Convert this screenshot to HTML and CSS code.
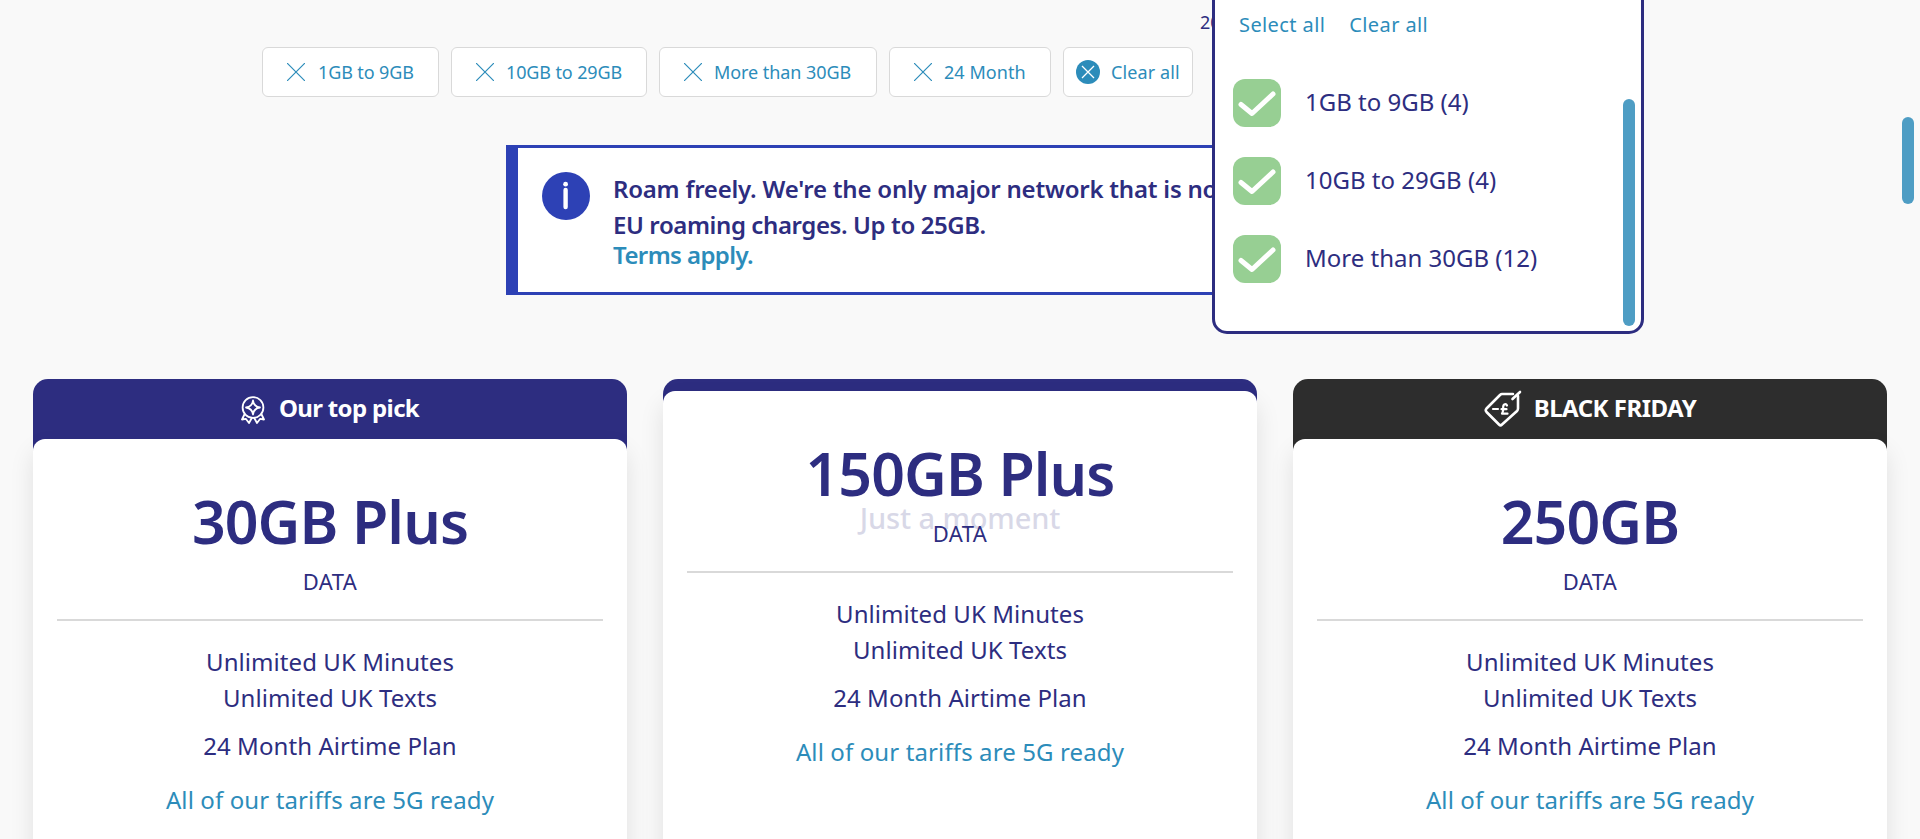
FILE: index.html
```html
<!DOCTYPE html>
<html lang="en">
<head>
<meta charset="utf-8">
<title>SIM only deals</title>
<link rel="stylesheet" href="styles.css">
</head>
<body>
<svg class="defs" width="0" height="0">
  <symbol id="cross" viewBox="0 0 18 18"><path d="M0 0L18 18M18 0L0 18" fill="none" stroke="currentColor" stroke-width="1.2"/></symbol>
  <symbol id="tick" viewBox="0 0 48 48"><path d="M8 25.5L19 34.5L40 15" fill="none" stroke="#fff" stroke-width="5" stroke-linecap="round" stroke-linejoin="round"/></symbol>
</svg>
<main class="page">
  <p class="count">20</p>
  <div class="chips">
    <button class="chip chip-a"><svg class="x"><use href="#cross"/></svg><span>1GB to 9GB</span></button>
    <button class="chip chip-b"><svg class="x"><use href="#cross"/></svg><span>10GB to 29GB</span></button>
    <button class="chip chip-c"><svg class="x"><use href="#cross"/></svg><span>More than 30GB</span></button>
    <button class="chip chip-d"><svg class="x"><use href="#cross"/></svg><span>24 Month</span></button>
    <button class="chip chip-clear"><svg class="clear" viewBox="0 0 24 24"><circle cx="12" cy="12" r="12" fill="currentColor"/><path d="M6 6L18 18M18 6L6 18" stroke="#fff" stroke-width="1.3"/></svg><span>Clear all</span></button>
  </div>
  <section class="notice">
    <svg class="info" viewBox="0 0 48 48"><circle cx="24" cy="24" r="24" fill="#2d41b5"/><circle cx="23.6" cy="12.2" r="2.4" fill="#fff"/><path d="M23.6 18V35" stroke="#fff" stroke-width="4.4" stroke-linecap="round"/></svg>
    <div class="notice-text">
      <p class="lead">Roam freely. We're the only major network that is not</p>
      <p>EU roaming charges. Up to 25GB.</p>
      <a class="terms">Terms apply.</a>
    </div>
  </section>
  <div class="cards">
    <article class="card">
      <header class="ribbon">
        <svg class="rosette" viewBox="0 0 24 28" fill="none" stroke="#fff" stroke-width="1.8" stroke-linejoin="round" stroke-linecap="round"><circle cx="12" cy="11.5" r="10.4"/><path d="M12 4.5Q12.8 10.7 19 11.5Q12.8 12.3 12 18.5Q11.2 12.3 5 11.5Q11.2 10.7 12 4.5Z"/><path d="M3.4 18.5L1 23.5L4.8 22.8L8 27L10.8 22M20.6 18.5L23 23.5L19.2 22.8L16 27L13.2 22"/></svg>
        <span>Our top pick</span>
      </header>
      <div class="body">
        <h2>30GB Plus</h2><p class="unit">DATA</p><hr>
        <p class="row">Unlimited UK Minutes<br>Unlimited UK Texts</p>
        <p class="row term">24 Month Airtime Plan</p>
        <p class="row ready">All of our tariffs are 5G ready</p>
      </div>
    </article>
    <article class="card">
      <header class="ribbon slim"></header>
      <div class="body">
        <h2>150GB Plus</h2><p class="unit">DATA</p><hr>
        <p class="row">Unlimited UK Minutes<br>Unlimited UK Texts</p>
        <p class="row term">24 Month Airtime Plan</p>
        <p class="row ready">All of our tariffs are 5G ready</p>
      </div>
    </article>
    <article class="card">
      <header class="ribbon dark">
        <svg class="tag" viewBox="0 0 38 38" fill="none" stroke="#fff" stroke-width="2.6" stroke-linejoin="round" stroke-linecap="round"><path d="M29 4H18Q17 4 16 5L2.5 18.5Q1 20.3 2.5 22L15 34.5Q16.5 36 18 34.5L33 21Q34 20 34 18.500V6"/><path d="M36 2L28.500 9"/><path d="M9 19H14" stroke-width="2.2"/><path d="M23 15.500Q22.300 13.800 20.800 14.200Q19 14.700 19.200 17.500Q19.500 21.500 18 23.700H23.500M17.500 19.200H22.500" stroke-width="2.2"/></svg>
        <span>BLACK FRIDAY</span>
      </header>
      <div class="body">
        <h2>250GB</h2><p class="unit">DATA</p><hr>
        <p class="row">Unlimited UK Minutes<br>Unlimited UK Texts</p>
        <p class="row term">24 Month Airtime Plan</p>
        <p class="row ready">All of our tariffs are 5G ready</p>
      </div>
    </article>
  </div>
</main>
<div class="loading">Just a moment</div>
<aside class="dropdown">
  <div class="actions"><a>Select all</a><a>Clear all</a></div>
  <ul class="options">
    <li><span class="check"><svg><use href="#tick"/></svg></span><span class="label">1GB to 9GB (4)</span></li>
    <li><span class="check"><svg><use href="#tick"/></svg></span><span class="label">10GB to 29GB (4)</span></li>
    <li><span class="check"><svg><use href="#tick"/></svg></span><span class="label">More than 30GB (12)</span></li>
  </ul>
  <div class="thumb"></div>
</aside>
<div class="page-thumb"></div>
</body>
</html>
```
FILE: styles.css
```css
* { box-sizing: border-box; }
body {
  margin: 0;
  height: 839px;
  overflow: hidden;
  position: relative;
  background: #f9f9f9;
  color: #2d2d80;
  font-family: "Noto Sans", "Open Sans", sans-serif;
  font-size: 24px;
}
p, h2, ul { margin: 0; padding: 0; }
.defs { position: absolute; }
.page { display: flex; flex-direction: column; height: 839px; overflow: hidden; }
.count { height: 47px; padding: 9px 0 0 1200px; font-size: 18px; line-height: 27px; white-space: nowrap; flex: none; }
.chips { display: flex; gap: 12px; margin-left: 262px; flex: none; }
.chip {
  display: flex; align-items: center; gap: 13px;
  height: 50px; padding: 0 0 0 24px;
  background: #fff; border: 1px solid #d9d9d9; border-radius: 6px;
  color: #2c8cba; font: 18px/24px "Noto Sans", sans-serif; letter-spacing: -.12px; white-space: nowrap;
}
.chip .x { width: 18px; height: 18px; flex: none; }
.chip span { padding-bottom: 1px; }
.chip-a { width: 177px; }
.chip-b { width: 196px; gap: 12px; }
.chip-c { width: 218px; gap: 12px; letter-spacing: -.06px; }
.chip-d { width: 162px; gap: 12px; letter-spacing: .05px; }
.chip-clear { width: 130px; padding-left: 12px; gap: 11px; letter-spacing: .1px; }
.clear { width: 24px; height: 24px; flex: none; }
.notice {
  display: flex; gap: 23px; flex: none;
  width: 908px; height: 150px; margin: 48px 0 0 506px; padding: 24px;
  background: #fff; border: 3px solid #2d41b5; border-left-width: 12px;
}
.info { width: 48px; height: 48px; flex: none; }
.notice-text { margin-top: -1px; font-weight: 600; line-height: 36px; letter-spacing: -.4px; white-space: nowrap; }
.lead { letter-spacing: -.22px; }
.terms { display: block; line-height: 24px; letter-spacing: -.6px; color: #2c8cba; }
.cards { display: flex; gap: 36px; margin: 84px 33px 0; flex: 1; }
.card {
  flex: 1; height: 520px; display: flex; flex-direction: column;
}
.ribbon {
  height: 72px; margin-bottom: -12px; padding-bottom: 12px; flex: none;
  display: flex; align-items: center; justify-content: center; gap: 14px;
  border-radius: 15px 15px 0 0;
  background: #2d2d80; color: #fff; font-weight: 700; letter-spacing: -.65px;
}
.ribbon span { padding-bottom: 3px; }
.slim { height: 24px; }
.dark { background: #2d2d2d; gap: 12px; letter-spacing: -.5px; }
.rosette { width: 24px; height: 28px; margin-top: 1px; }
.tag { width: 38px; height: 38px; margin-top: -1px; }
.body {
  flex: 1; padding: 0 24px; text-align: center;
  background: #fff; border-radius: 12px 12px 0 0;
  box-shadow: 0 12px 24px rgba(0, 0, 0, .1);
}
h2 { padding-top: 46px; font-size: 59px; line-height: 72px; font-weight: 600; letter-spacing: -.9px; }
.unit { padding-top: 9px; font-size: 22px; line-height: 30px; letter-spacing: .4px; }
hr { height: 2px; margin: 23px 0 23px; border: 0; background: #d9d9d9; }
.row { line-height: 36px; letter-spacing: .07px; }
.term { margin-top: 12px; }
.ready { margin-top: 18px; letter-spacing: .12px; color: #2c8cba; }
.loading {
  position: absolute; left: 0; top: 498px; width: 1920px;
  text-align: center; font-size: 29px; line-height: 40px; font-weight: 500; letter-spacing: -.1px; opacity: .18;
}
.dropdown {
  position: absolute; left: 1212px; top: -60px; width: 432px; height: 394px;
  padding: 69px 18px 0 18px;
  background: #fff; border: 3px solid #2d2d80; border-radius: 15px;
}
.actions { display: flex; gap: 24px; padding-left: 6px; font-size: 20px; line-height: 26px; letter-spacing: .4px; color: #2c8cba; }
.options { display: flex; flex-direction: column; gap: 30px; margin-top: 41px; list-style: none; }
.options li { display: flex; align-items: center; gap: 24px; line-height: 46px; }
.label { padding-bottom: 2px; }
.check { width: 48px; height: 48px; border-radius: 12px; background: #97cf93; }
.check svg { display: block; width: 48px; height: 48px; }
.thumb { position: absolute; right: 6px; bottom: 5px; width: 12px; height: 227px; border-radius: 6px; background: #4e9dc4; }
.page-thumb { position: absolute; left: 1902px; top: 117px; width: 12px; height: 87px; border-radius: 6px; background: #4e9dc4; }
```
